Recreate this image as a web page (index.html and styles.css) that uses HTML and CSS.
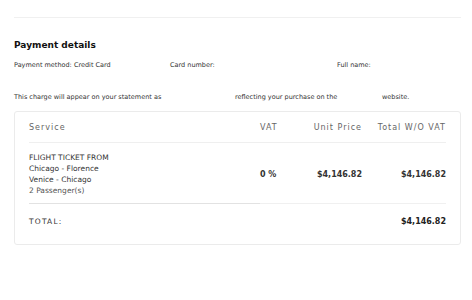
FILE: index.html
```html
<!DOCTYPE html>
<html lang="en">
<head>
  <meta charset="UTF-8">
  <meta name="viewport" content="width=device-width, initial-scale=1.0">
  <title>Payment details</title>
  <link rel="stylesheet" href="styles.css">
</head>
<body>
  <div class="page">
    <hr class="divider">

    <!-- Payment info -->
    <section class="payment">
      <h2>Payment details</h2>
      <div class="info-row">
        <span>Payment method: Credit Card</span>
        <span>Card number:</span>
        <span>Full name:</span>
      </div>
      <div class="statement-row">
        <span>This charge will appear on your statement as</span>
        <span>reflecting your purchase on the</span>
        <span>website.</span>
      </div>
    </section>

    <!-- Invoice table -->
    <div class="invoice">
      <table>
        <colgroup>
          <col>
          <col class="w-vat">
          <col class="w-unit">
          <col class="w-total">
        </colgroup>
        <thead>
          <tr>
            <th class="col-service">Service</th>
            <th class="col-vat">VAT</th>
            <th class="col-num">Unit Price</th>
            <th class="col-num">Total W/O VAT</th>
          </tr>
        </thead>
        <tbody>
          <tr class="item">
            <td class="col-service">
              <div>FLIGHT TICKET FROM</div>
              <div>Chicago - Florence</div>
              <div>Venice - Chicago</div>
              <div class="muted">2 Passenger(s)</div>
            </td>
            <td class="col-vat strong">0 %</td>
            <td class="col-num strong">$4,146.82</td>
            <td class="col-num strong">$4,146.82</td>
          </tr>
          <tr class="total">
            <td class="label" colspan="3">TOTAL:</td>
            <td class="col-num strong">$4,146.82</td>
          </tr>
        </tbody>
      </table>
    </div>
  </div>
</body>
</html>
```

FILE: styles.css
```css
/* Page */
body {
  margin: 0;
  font-family: 'DejaVu Sans', sans-serif;
  background-color: #ffffff;
  color: #222;
}

.page {
  padding: 17px 11px 0 14px;
}

.divider {
  border: none;
  border-top: 1px solid #f0f0f0;
  margin: 0;
}

/* Payment info */
.payment h2 {
  font-size: 9px;
  font-weight: bold;
  margin: 22px 0 11px 0;
  color: #111;
}

.info-row,
.statement-row {
  display: grid;
  font-size: 6.5px;
  color: #333;
}

.info-row {
  grid-template-columns: 156px 167px 1fr;
}

.statement-row {
  grid-template-columns: 221px 147px 1fr;
  margin-top: 24px;
}

/* Invoice card */
.invoice {
  margin-top: 10px;
  border: 1px solid #ebebeb;
  border-radius: 3px;
  padding: 5px 14px 18px 14px;
}

.invoice table {
  width: 100%;
  border-collapse: collapse;
  table-layout: fixed;
}

.w-vat {
  width: 40px;
}

.w-unit {
  width: 62px;
}

.w-total {
  width: 84px;
}

.invoice th {
  font-size: 8px;
  font-weight: normal;
  letter-spacing: 1px;
  color: #666;
  padding: 6px 0 10px 0;
  border-bottom: 1px solid #efefef;
  white-space: nowrap;
}

.invoice td {
  font-size: 8px;
  padding: 0;
  white-space: nowrap;
}

.col-service {
  text-align: left;
}

.col-vat {
  text-align: left;
}

.col-num {
  text-align: right;
}

.item td {
  padding: 9px 0 7px 0;
  border-bottom: 1px solid #f0f0f0;
  line-height: 11px;
  color: #333;
}

.item td.col-service {
  font-size: 7.5px;
  border-bottom-color: #e2e2e2;
}

.muted {
  color: #555;
}

.strong {
  font-weight: bold;
  color: #222;
}

.total td {
  padding-top: 13px;
}

.total .label {
  font-size: 7.5px;
  letter-spacing: 1.2px;
  color: #333;
}
```
